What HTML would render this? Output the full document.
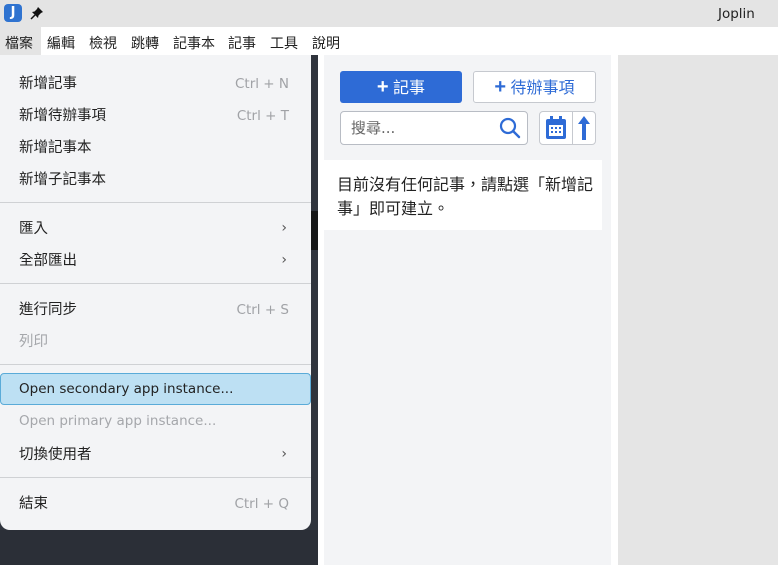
<!DOCTYPE html>
<html><head><meta charset="utf-8"><style>
*{margin:0;padding:0;box-sizing:border-box}
body{width:778px;height:565px;overflow:hidden;position:relative;background:#fff;font-family:"DejaVu Sans","Noto Sans CJK TC",sans-serif;font-size:14px;color:#222}
.abs{position:absolute}
#title{left:0;top:0;width:778px;height:27px;background:#e4e4e4}
#menubar{left:0;top:27px;width:778px;height:28px;background:#fff}
#menubar span{position:absolute;top:6px;font-size:14px;color:#222;font-family:"Liberation Sans","Noto Sans CJK TC",sans-serif}
#side{left:0;top:55px;width:318px;height:510px;background:#2f343d}
#list{left:324px;top:55px;width:287px;height:510px;background:#f3f4f6}
#right{left:618px;top:55px;width:160px;height:510px;background:#e5e5e5}
#menu{left:0;top:55px;width:311px;height:475px;background:#f3f4f6;border-radius:0 0 10px 10px}
.mi,.sc,.ch{position:absolute;line-height:20px;height:20px}
.mi{left:19px;font-size:13.5px;color:#222}
.cj{font-family:"Liberation Sans","Noto Sans CJK TC",sans-serif;font-size:14.5px}
.sc{right:22px;font-size:13.5px;color:#a0a2a6}
.ch{right:24px;font-size:14px;color:#555}
.sep{position:absolute;left:0;width:311px;height:1px;background:#cfd1d4}
</style></head><body>
<div class="abs" id="title"></div>
<div class="abs" style="left:4px;top:4px;width:18px;height:18px;border-radius:4px;background:#2f73d0;color:#fff;font-weight:bold;font-size:13px;text-align:center;line-height:18px">J</div>
<svg class="abs" style="left:30px;top:6px" width="14" height="14" viewBox="0 0 14 14"><path d="M8 1 L13 6 L11 7 L8.5 9.5 L8 12 L2 6 L4.5 5.5 L7 3 Z" fill="#111"/><line x1="5" y1="9" x2="1" y2="13" stroke="#111" stroke-width="1.5"/></svg>
<div class="abs" style="left:718px;top:6px;font-size:13.5px;color:#222">Joplin</div>
<div class="abs" id="menubar">
<div class="abs" style="left:0;top:0;width:41px;height:28px;background:#e4e4e4"></div>
<span style="left:5px">檔案</span><span style="left:47px">編輯</span><span style="left:89px">檢視</span><span style="left:131px">跳轉</span><span style="left:173px">記事本</span><span style="left:228px">記事</span><span style="left:270px">工具</span><span style="left:312px">說明</span>
</div>
<div class="abs" id="side"></div>
<div class="abs" style="left:311px;top:211px;width:7px;height:39px;background:#151617"></div>
<div class="abs" style="left:0;top:530px;width:318px;height:35px;background:#2b2f37"></div>
<div class="abs" id="list"></div>
<div class="abs" id="right"></div>
<div class="abs" style="left:340px;top:71px;width:122px;height:32px;background:#2e6bd6;border-radius:3px;color:#fff;font-size:16px;text-align:center;line-height:32px;font-family:'Liberation Sans','Noto Sans CJK TC',sans-serif"><b style="font-size:20px">+</b> 記事</div>
<div class="abs" style="left:473px;top:71px;width:123px;height:32px;background:#fff;border:1px solid #c6c9cf;border-radius:3px;color:#2e6bd6;font-size:16px;text-align:center;line-height:30px;font-family:'Liberation Sans','Noto Sans CJK TC',sans-serif"><b style="font-size:20px">+</b> 待辦事項</div>
<div class="abs" style="left:340px;top:111px;width:188px;height:34px;background:#fff;border:1px solid #b8bcc4;border-radius:4px;color:#666;font-size:15px;padding-left:10px;line-height:32px">搜尋...</div>
<svg class="abs" style="left:498px;top:116px" width="24" height="24" viewBox="0 0 24 24"><circle cx="10" cy="10" r="7" fill="none" stroke="#2e6bd6" stroke-width="2.2"/><line x1="15" y1="15" x2="21" y2="21" stroke="#2e6bd6" stroke-width="2.4" stroke-linecap="round"/></svg>
<div class="abs" style="left:539px;top:111px;width:57px;height:34px;background:#fff;border:1px solid #c6c9cf;border-radius:4px"></div>
<div class="abs" style="left:572px;top:112px;width:1px;height:32px;background:#c6c9cf"></div>
<svg class="abs" style="left:544px;top:115px" width="24" height="26" viewBox="0 0 24 26"><rect x="2" y="4" width="20" height="20" rx="2" fill="#2e6bd6"/><rect x="6" y="1" width="3" height="6" fill="#2e6bd6"/><rect x="15" y="1" width="3" height="6" fill="#2e6bd6"/><rect x="5" y="10" width="14" height="11" fill="#fff"/><g fill="#2e6bd6"><rect x="7" y="12" width="2" height="2"/><rect x="11" y="12" width="2" height="2"/><rect x="15" y="12" width="2" height="2"/><rect x="7" y="16" width="2" height="2"/><rect x="11" y="16" width="2" height="2"/><rect x="15" y="16" width="2" height="2"/></g></svg>
<svg class="abs" style="left:577px;top:114px" width="14" height="28" viewBox="0 0 14 28"><path d="M7 2 L13 10 H9 V26 H5 V10 H1 Z" fill="#2e6bd6"/></svg>
<div class="abs" style="left:324px;top:160px;width:278px;height:70px;background:#fff"></div>
<div class="abs" style="left:337px;top:174px;width:260px;font-size:16px;line-height:24px;color:#222;font-family:'Liberation Sans','Noto Sans CJK TC',sans-serif">目前沒有任何記事，請點選「新增記事」即可建立。</div>
<div class="abs" id="menu">
<div class="mi cj" style="top:19px">新增記事</div><div class="sc" style="top:19px">Ctrl + N</div>
<div class="mi cj" style="top:51px">新增待辦事項</div><div class="sc" style="top:51px">Ctrl + T</div>
<div class="mi cj" style="top:83px">新增記事本</div>
<div class="mi cj" style="top:115px">新增子記事本</div>
<div class="sep" style="top:147px"></div>
<div class="mi cj" style="top:164px">匯入</div><div class="ch" style="top:163px">›</div>
<div class="mi cj" style="top:196px">全部匯出</div><div class="ch" style="top:195px">›</div>
<div class="sep" style="top:228px"></div>
<div class="mi cj" style="top:245px">進行同步</div><div class="sc" style="top:245px">Ctrl + S</div>
<div class="mi cj" style="top:277px;color:#a5a7ab">列印</div>
<div class="sep" style="top:309px"></div>
<div class="abs" style="left:0;top:318px;width:311px;height:32px;background:#bde0f3;border:1px solid #5aabd8;border-radius:4px"></div>
<div class="mi" style="top:324px">Open secondary app instance...</div>
<div class="mi" style="top:356px;color:#a5a7ab">Open primary app instance...</div>
<div class="mi cj" style="top:390px">切換使用者</div><div class="ch" style="top:389px">›</div>
<div class="sep" style="top:422px"></div>
<div class="mi cj" style="top:439px">結束</div><div class="sc" style="top:439px">Ctrl + Q</div>
</div>
</body></html>
